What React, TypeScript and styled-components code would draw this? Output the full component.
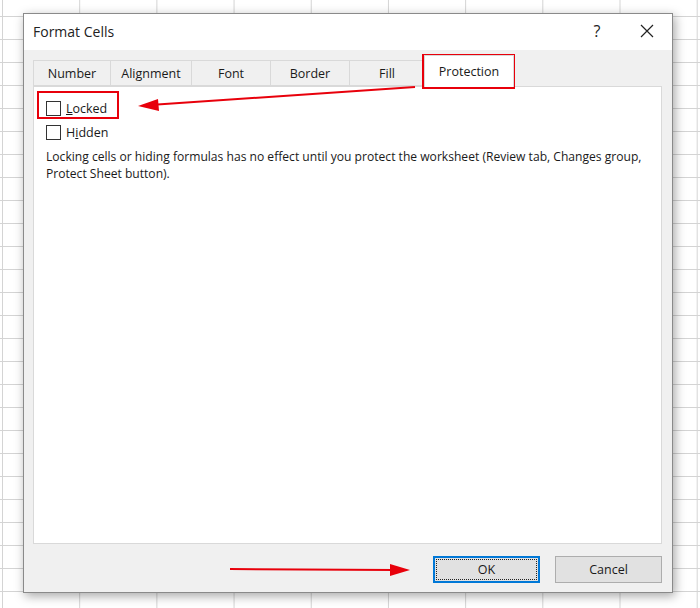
import React from "react";
import styled, { createGlobalStyle } from "styled-components";

const Global = createGlobalStyle`
  html, body { margin: 0; padding: 0; }
  body { font-family: "Open Sans", "Noto Sans", sans-serif; color: #1a1a1a; }
`;

const Sheet = styled.div`
  position: relative;
  width: 700px;
  height: 608px;
  overflow: hidden;
  background-color: #fff;
  background-image:
    linear-gradient(to right, #d4d4d4 1px, transparent 1px),
    linear-gradient(to bottom, #d4d4d4 1px, transparent 1px);
  background-size: 77.2px 23px, 77.2px 23px;
  background-position: 2px 0, 0 -7px;
  padding: 13px 0 0 23px;
  box-sizing: border-box;
`;

const Dialog = styled.div`
  width: 650px;
  height: 580px;
  background: #f0f0f0;
  border: 1px solid #8a8a8a;
  box-sizing: border-box;
  box-shadow: 2px 3px 10px rgba(0,0,0,0.35);
  display: flex;
  flex-direction: column;
`;

const TitleBar = styled.div`
  height: 36px;
  background: #fff;
  display: flex;
  align-items: center;
  padding: 0 0 2px 9px;
  box-sizing: border-box;
  font-size: 14px;
  color: #222;
`;

const Title = styled.div` flex: 1; `;

const TitleBtn = styled.div`
  width: 50px;
  display: flex;
  justify-content: center;
  align-items: center;
  font-size: 16px;
`;

const Body = styled.div`
  flex: 1;
  display: flex;
  flex-direction: column;
  padding: 1px 10px 0 9px;
`;

const Tabs = styled.div`
  display: flex;
  align-items: flex-end;
  height: 35px;
`;

const Tab = styled.div<{ $w: number; $active?: boolean }>`
  width: ${p => p.$w}px;
  height: ${p => (p.$active ? 32 : 26)}px;
  box-sizing: border-box;
  display: flex;
  align-items: center;
  justify-content: center;
  font-size: 12.5px;
  background: ${p => (p.$active ? "#fff" : "#f0f0f0")};
  border: 1px solid #d9d9d9;
  border-bottom: ${p => (p.$active ? "none" : "1px solid #d9d9d9")};
  margin-left: -1px;
  margin-bottom: ${p => (p.$active ? "-1px" : "0")};
  position: relative;
  z-index: ${p => (p.$active ? 1 : 0)};
`;

const Panel = styled.div`
  height: 458px;
  background: #fff;
  border: 1px solid #d9d9d9;
  padding: 9px 12px;
  box-sizing: border-box;
  font-size: 12px;
`;

const CheckRow = styled.div`
  display: flex;
  align-items: center;
  gap: 5px;
  height: 24px;
`;

const Box = styled.span`
  width: 13px;
  height: 13px;
  border: 1px solid #333;
  background: #fff;
  display: inline-block;
`;

const Label = styled.span` font-size: 12.5px; `;

const Note = styled.p`
  margin: 4px 0 0;
  line-height: 17px;
  font-size: 12.1px;
`;

const Footer = styled.div`
  display: flex;
  justify-content: flex-end;
  gap: 15px;
  padding: 12px 0 0;
`;

const Button = styled.div<{ $default?: boolean }>`
  width: 107px;
  height: 27px;
  box-sizing: border-box;
  background: #e1e1e1;
  border: ${p => (p.$default ? "2px solid #0078d7" : "1px solid #adadad")};
  display: flex;
  align-items: center;
  justify-content: center;
  font-size: 12.5px;
  position: relative;
  &::after {
    content: "";
    display: ${p => (p.$default ? "block" : "none")};
    position: absolute;
    inset: 1px;
    border: 1px dotted #222;
  }
`;

const Overlay = styled.svg`
  position: absolute;
  left: 0;
  top: 0;
  pointer-events: none;
`;

export default function App() {
  return (
    <>
      <Global />
      <Sheet>
        <Dialog>
          <TitleBar>
            <Title>Format Cells</Title>
            <TitleBtn>?</TitleBtn>
            <TitleBtn>
              <svg width="14" height="14" viewBox="0 0 14 14"><path d="M1 1L13 13M13 1L1 13" stroke="#222" strokeWidth="1.2" /></svg>
            </TitleBtn>
          </TitleBar>
          <Body>
            <Tabs>
              <Tab $w={78} style={{ marginLeft: 0 }}>Number</Tab>
              <Tab $w={82}>Alignment</Tab>
              <Tab $w={80}>Font</Tab>
              <Tab $w={80}>Border</Tab>
              <Tab $w={76}>Fill</Tab>
              <Tab $w={90} $active>Protection</Tab>
            </Tabs>
            <Panel>
              <CheckRow><Box /><Label><u>L</u>ocked</Label></CheckRow>
              <CheckRow><Box /><Label>H<u>i</u>dden</Label></CheckRow>
              <Note>
                Locking cells or hiding formulas has no effect until you protect the worksheet (Review tab, Changes group,
                Protect Sheet button).
              </Note>
            </Panel>
            <Footer>
              <Button $default>OK</Button>
              <Button>Cancel</Button>
            </Footer>
          </Body>
        </Dialog>
        <Overlay width="700" height="608">
          <rect x="38" y="92" width="80" height="26" fill="none" stroke="#e8000b" strokeWidth="2" />
          <rect x="423" y="55" width="91" height="33" fill="none" stroke="#e8000b" strokeWidth="2" />
          <line x1="415" y1="87" x2="150" y2="105" stroke="#e8000b" strokeWidth="2" />
          <polygon points="138,106 158,99 159,111" fill="#e8000b" />
          <line x1="230" y1="569" x2="395" y2="570" stroke="#e8000b" strokeWidth="2" />
          <polygon points="410,570 390,564 390,576" fill="#e8000b" />
        </Overlay>
      </Sheet>
    </>
  );
}
